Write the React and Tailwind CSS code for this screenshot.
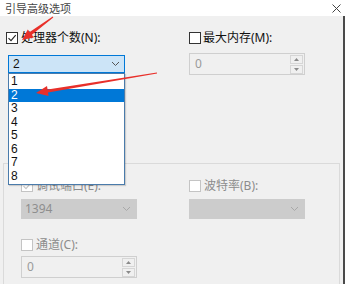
import React from "react";

function Check({ checked, disabled }) {
  return (
    <span
      className={
        "flex h-[12px] w-[12px] shrink-0 items-center justify-center border bg-white " +
        (disabled ? "border-[#c4c4c4]" : "border-[#333]")
      }
    >
      {checked && (
        <svg width="10" height="10" viewBox="0 0 10 10">
          <path
            d="M1.5 5.2 L4 7.7 L8.7 2.2"
            fill="none"
            stroke={disabled ? "#c4c4c4" : "#222"}
            strokeWidth="1.1"
          />
        </svg>
      )}
    </span>
  );
}

function Chevron({ color }) {
  return (
    <svg width="9" height="6" viewBox="0 0 9 6">
      <path d="M1 1 L4.5 4.5 L8 1" fill="none" stroke={color} strokeWidth="1" />
    </svg>
  );
}

function Spin({ value, w }) {
  return (
    <div className={"flex h-[22px] items-center border border-[#cfcfcf] bg-[#f0f0f0] " + w}>
      <span className="flex-1 pl-[5px] text-[#9a9a9a]">{value}</span>
      <div className="mr-[1px] flex h-[19px] w-[13px] flex-col gap-[1px]">
        <div className="flex flex-1 items-center justify-center border border-[#d6d6d6]">
          <svg width="5" height="3" viewBox="0 0 5 3">
            <path d="M0 3 L2.5 0 L5 3Z" fill="#8a8a8a" />
          </svg>
        </div>
        <div className="flex flex-1 items-center justify-center border border-[#d6d6d6]">
          <svg width="5" height="3" viewBox="0 0 5 3">
            <path d="M0 0 L2.5 3 L5 0Z" fill="#8a8a8a" />
          </svg>
        </div>
      </div>
    </div>
  );
}

function Label({ children, gray }) {
  return (
    <span className={"leading-[12px] " + (gray ? "text-[#8c8c8c]" : "text-[#111]")}>{children}</span>
  );
}

export default function App() {
  const items = ["1", "2", "3", "4", "5", "6", "7", "8"];
  return (
    <div className="relative h-[284px] w-[345px] overflow-hidden bg-[#f0f0f0] font-['Noto_Sans','Noto_Sans_CJK_SC',sans-serif] text-[12px]">
      {/* title bar */}
      <div className="flex h-[16px] items-center justify-between bg-white pl-[5px] pr-[4px]">
        <span className="text-[11px] leading-[11px] text-[#444]">引导高级选项</span>
        <svg width="9" height="9" viewBox="0 0 9 9">
          <path d="M0.5 0.5 L8.5 8.5 M8.5 0.5 L0.5 8.5" stroke="#444" strokeWidth="1" />
        </svg>
      </div>

      <div className="flex h-[268px] flex-col border-r-2 border-[#4a4a4a]">
        {/* row 1 */}
        <div className="mt-[16px] flex">
          <div className="flex w-[189px] items-center gap-[3px] pl-[6px]">
            <Check checked />
            <Label>处理器个数(N):</Label>
          </div>
          <div className="flex items-center gap-[2px]">
            <Check />
            <Label>最大内存(M):</Label>
          </div>
        </div>

        {/* row 2 */}
        <div className="mt-[9px] flex items-start">
          <div className="w-[189px] pl-[8px]">
            <div className="mt-[2px] flex h-[18px] w-[117px] items-center justify-between border border-[#0078d7] bg-[#cce4f7] pl-[4px] pr-[4px]">
              <span className="font-['Liberation_Sans',sans-serif] text-[#111]">2</span>
              <Chevron color="#555" />
            </div>
          </div>
          <Spin value="0" w="w-[116px]" />
        </div>

        {/* group box */}
        <div className="ml-[3px] mt-[88px] w-[337px] flex-1 border border-b-0 border-[#dadada]">
          <div className="flex pl-[17px] pt-[16px]">
            <div className="w-[168px]">
              <div className="flex items-center gap-[3px]">
                <Check checked disabled />
                <Label gray>调试端口(E):</Label>
              </div>
              <div className="mt-[7px] flex h-[20px] w-[116px] items-center justify-between bg-[#cccccc] pl-[4px] pr-[6px]">
                <span className="text-[#8e8e8e]">1394</span>
                <Chevron color="#a8a8a8" />
              </div>
              <div className="mt-[20px] flex items-center gap-[3px]">
                <Check disabled />
                <Label gray>通道(C):</Label>
              </div>
              <div className="mt-[5px]">
                <Spin value="0" w="w-[116px]" />
              </div>
            </div>
            <div>
              <div className="flex items-center gap-[3px]">
                <Check disabled />
                <Label gray>波特率(B):</Label>
              </div>
              <div className="mt-[7px] flex h-[20px] w-[116px] items-center justify-end bg-[#cccccc] pr-[6px]">
                <Chevron color="#a8a8a8" />
              </div>
            </div>
          </div>
        </div>
      </div>

      {/* open dropdown list */}
      <div className="absolute left-[8px] top-[73px] w-[117px] border border-[#4a7bab] bg-white py-[1px] font-['Liberation_Sans',sans-serif] shadow-[1px_1px_1px_rgba(0,0,0,0.15)]">
        {items.map((n) => (
          <div
            key={n}
            className={
              "h-[13.5px] pl-[2px] text-[12px] leading-[13.5px] " +
              (n === "2" ? "bg-[#0078d7] text-white" : "text-[#111]")
            }
          >
            {n}
          </div>
        ))}
      </div>

      {/* red annotation arrows */}
      <svg className="pointer-events-none absolute left-0 top-0" width="345" height="284">
        <polygon
          points="53.3,17.4 31.9,34.8 33.8,37.4 22,40 27.8,29.4 29.7,32.0 52.7,16.6"
          fill="#e8302a"
        />
        <polygon
          points="157.1,73.5 48.0,92.5 48.6,95.9 36,93 47.0,86.1 47.6,89.5 156.9,72.5"
          fill="#e8302a"
        />
      </svg>
    </div>
  );
}
